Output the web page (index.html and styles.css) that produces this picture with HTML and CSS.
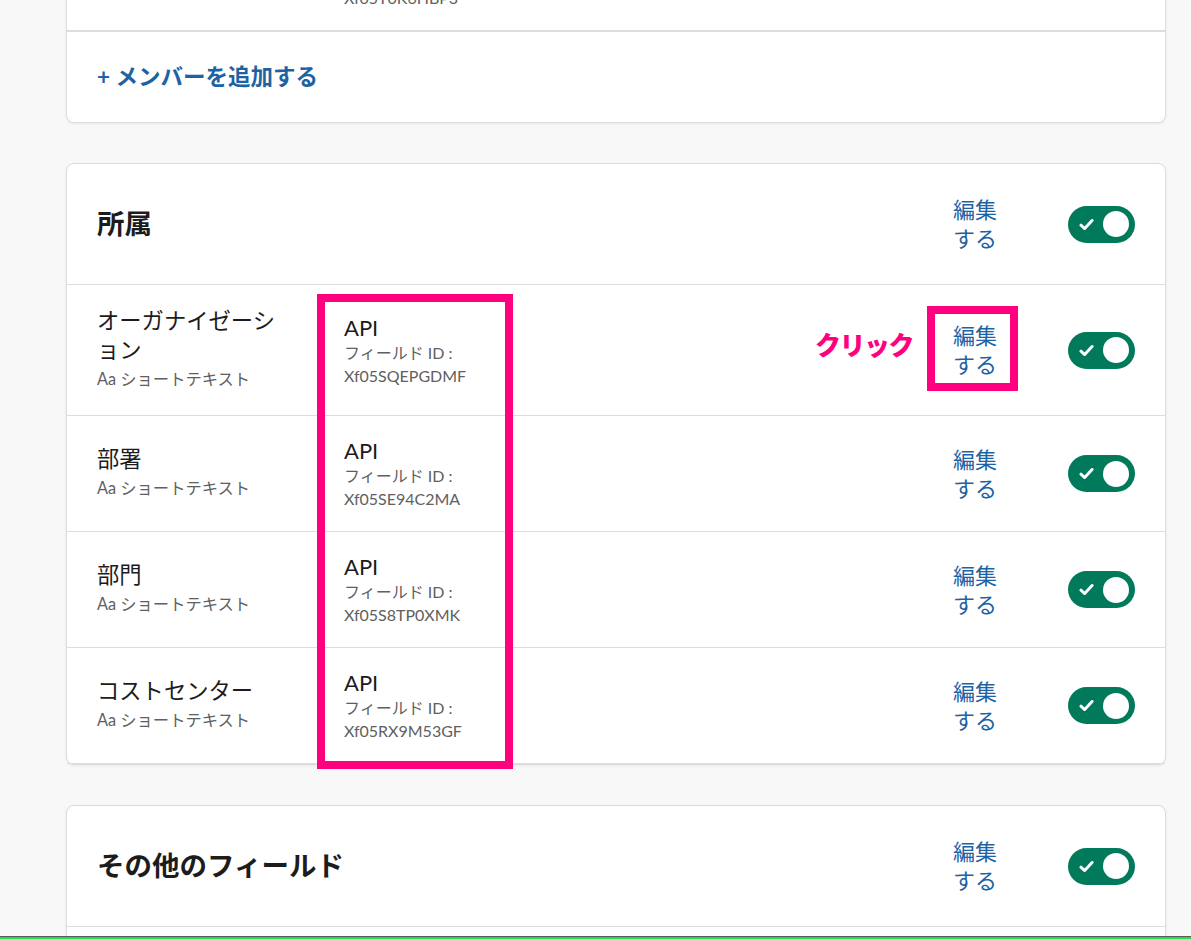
FILE: index.html
```html
<!DOCTYPE html>
<html lang="ja">
<head>
<meta charset="utf-8">
<title>所属</title>
<link rel="stylesheet" href="styles.css">
</head>
<body>
<main class="page">
  <section class="card card-members">
    <div class="field-row">
      <div class="name"></div>
      <div class="api">
        <div class="api-title">API</div>
        <div class="api-meta">フィールド ID :</div>
        <div class="api-meta">Xf05T0K6HBP3</div>
      </div>
    </div>
    <div class="add-row"><a class="add-link" href="#">+ メンバーを追加する</a></div>
  </section>

  <section class="card">
    <div class="card-head">
      <h2 class="card-title">所属</h2>
      <a class="edit" href="#">編集する</a>
      <span class="toggle"><svg class="check" viewBox="0 0 14 12" width="15" height="13"><path d="M1.8 6.6 L5.3 9.8 L12.2 2.2" fill="none" stroke="#fff" stroke-width="2.7" stroke-linecap="round" stroke-linejoin="round"/></svg><span class="knob"></span></span>
    </div>

    <div class="field-row">
      <div class="name">
        <div class="name-label">オーガナイゼーション</div>
        <div class="name-type">Aa ショートテキスト</div>
      </div>
      <div class="api">
        <div class="api-title">API</div>
        <div class="api-meta">フィールド ID :</div>
        <div class="api-meta">Xf05SQEPGDMF</div>
      </div>
      <a class="edit" href="#">編集する</a>
      <span class="toggle"><svg class="check" viewBox="0 0 14 12" width="15" height="13"><path d="M1.8 6.6 L5.3 9.8 L12.2 2.2" fill="none" stroke="#fff" stroke-width="2.7" stroke-linecap="round" stroke-linejoin="round"/></svg><span class="knob"></span></span>
    </div>

    <div class="field-row">
      <div class="name">
        <div class="name-label">部署</div>
        <div class="name-type">Aa ショートテキスト</div>
      </div>
      <div class="api">
        <div class="api-title">API</div>
        <div class="api-meta">フィールド ID :</div>
        <div class="api-meta">Xf05SE94C2MA</div>
      </div>
      <a class="edit" href="#">編集する</a>
      <span class="toggle"><svg class="check" viewBox="0 0 14 12" width="15" height="13"><path d="M1.8 6.6 L5.3 9.8 L12.2 2.2" fill="none" stroke="#fff" stroke-width="2.7" stroke-linecap="round" stroke-linejoin="round"/></svg><span class="knob"></span></span>
    </div>

    <div class="field-row">
      <div class="name">
        <div class="name-label">部門</div>
        <div class="name-type">Aa ショートテキスト</div>
      </div>
      <div class="api">
        <div class="api-title">API</div>
        <div class="api-meta">フィールド ID :</div>
        <div class="api-meta">Xf05S8TP0XMK</div>
      </div>
      <a class="edit" href="#">編集する</a>
      <span class="toggle"><svg class="check" viewBox="0 0 14 12" width="15" height="13"><path d="M1.8 6.6 L5.3 9.8 L12.2 2.2" fill="none" stroke="#fff" stroke-width="2.7" stroke-linecap="round" stroke-linejoin="round"/></svg><span class="knob"></span></span>
    </div>

    <div class="field-row">
      <div class="name">
        <div class="name-label">コストセンター</div>
        <div class="name-type">Aa ショートテキスト</div>
      </div>
      <div class="api">
        <div class="api-title">API</div>
        <div class="api-meta">フィールド ID :</div>
        <div class="api-meta">Xf05RX9M53GF</div>
      </div>
      <a class="edit" href="#">編集する</a>
      <span class="toggle"><svg class="check" viewBox="0 0 14 12" width="15" height="13"><path d="M1.8 6.6 L5.3 9.8 L12.2 2.2" fill="none" stroke="#fff" stroke-width="2.7" stroke-linecap="round" stroke-linejoin="round"/></svg><span class="knob"></span></span>
    </div>

    <div class="mark mark-api"></div>
    <div class="mark mark-edit"></div>
    <div class="mark-label">クリック</div>
  </section>

  <section class="card">
    <div class="card-head">
      <h2 class="card-title">その他のフィールド</h2>
      <a class="edit" href="#">編集する</a>
      <span class="toggle"><svg class="check" viewBox="0 0 14 12" width="15" height="13"><path d="M1.8 6.6 L5.3 9.8 L12.2 2.2" fill="none" stroke="#fff" stroke-width="2.7" stroke-linecap="round" stroke-linejoin="round"/></svg><span class="knob"></span></span>
    </div>
    <div class="field-row field-row-empty"></div>
  </section>
</main>
<div class="bottom-bar"></div>
</body>
</html>
```

FILE: styles.css
```css
html, body {
  margin: 0;
  padding: 0;
}

body {
  background: #f8f8f8;
  font-family: Lato, "Noto Sans CJK JP", sans-serif;
  color: #1d1c1d;
  overflow: hidden;
}

.page {
  width: 1100px;
  margin-left: 66px;
}

.card {
  position: relative;
  background: #fff;
  border: 1px solid #dddddd;
  border-radius: 8px;
  box-shadow: 0 1px 3px rgba(0, 0, 0, 0.07);
  margin-bottom: 40px;
}

.card-members {
  margin-top: -86px;
}

.card-head {
  display: flex;
  align-items: center;
  padding: 31px 30px;
  border-bottom: 1px solid #dddddd;
}

.card-title {
  flex: 1;
  margin: 0;
  font-size: 27.5px;
  font-weight: 700;
  line-height: 34px;
}

.field-row {
  display: flex;
  align-items: center;
  padding: 21px 30px;
  border-bottom: 1px solid #dddddd;
}

.field-row:last-of-type {
  border-bottom: none;
}

.field-row-empty {
  height: 60px;
}

.name {
  width: 190px;
  margin-right: 57px;
  line-break: loose;
}

.name-label {
  font-size: 22.3px;
  line-height: 29px;
}

.name-type {
  font-size: 16.3px;
  line-height: 30px;
  color: #616061;
}

.api {
  flex: 1;
}

.api-title {
  font-size: 22px;
  line-height: 27px;
}

.api-meta {
  font-size: 16px;
  line-height: 23px;
  color: #616061;
}

.edit {
  width: 50px;
  font-size: 22px;
  line-height: 29px;
  color: #1d63a3;
  text-decoration: none;
}

.toggle {
  margin-left: 65px;
  width: 67px;
  height: 37px;
  box-sizing: border-box;
  border-radius: 19px;
  background: #007a5a;
  display: flex;
  align-items: center;
  justify-content: space-between;
  padding: 0 6px 0 11px;
}

.check {
  display: block;
}

.knob {
  width: 26px;
  height: 26px;
  border-radius: 50%;
  background: #fff;
}

.add-row {
  border-top: 1px solid #dddddd;
  padding: 30px 30px 31px;
}

.add-link {
  font-size: 22.5px;
  font-weight: 700;
  line-height: 29px;
  color: #1d63a3;
  text-decoration: none;
}

.mark {
  position: absolute;
  box-sizing: border-box;
  border: 8px solid #ff0080;
}

.mark-api {
  left: 250px;
  top: 130px;
  width: 196px;
  height: 475px;
}

.mark-edit {
  left: 860px;
  top: 142px;
  width: 91px;
  height: 85px;
}

.mark-label {
  position: absolute;
  left: 748px;
  top: 164px;
  font-size: 26px;
  line-height: 34px;
  font-weight: 900;
  letter-spacing: -1.5px;
  color: #ff0080;
}

.bottom-bar {
  position: fixed;
  left: 0;
  right: 0;
  bottom: 0;
  height: 2px;
  border-top: 1px solid #5a5a5a;
  background: #1fe04a;
}
```
